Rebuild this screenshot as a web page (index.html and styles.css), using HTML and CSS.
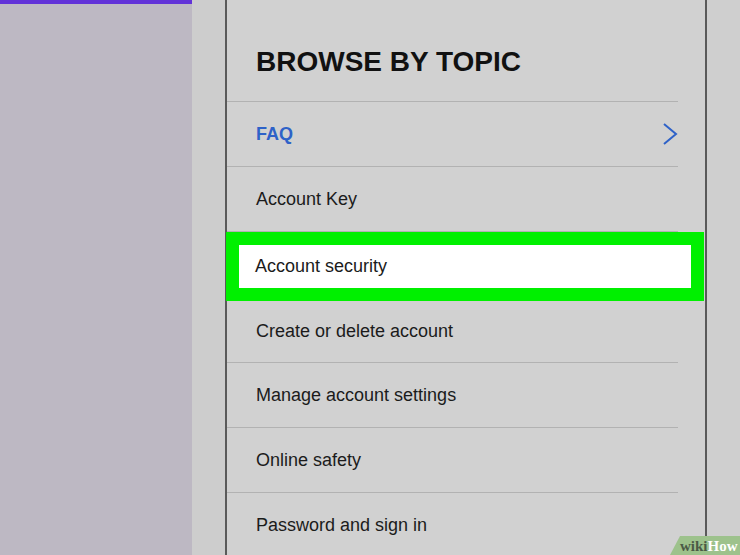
FILE: index.html
```html
<!DOCTYPE html>
<html lang="en">
<head>
    <meta charset="UTF-8">
    <meta name="viewport" content="width=device-width, initial-scale=1.0">
    <title>Browse by topic</title>
    <link rel="stylesheet" href="styles.css">
</head>
<body>
    <div class="page">
        <div class="sidebar"></div>
        <div class="gutter"></div>
        <div class="panel">
            <h1 class="heading">BROWSE BY TOPIC</h1>
            <ul class="topics">
                <li class="topic faq">
                    <span>FAQ</span>
                    <svg class="chevron" width="16" height="24" viewBox="0 0 16 24">
                        <polyline points="2,2 14,12 2,22" fill="none" stroke="#2e62c8" stroke-width="2"/>
                    </svg>
                </li>
                <li class="topic">Account Key</li>
                <li class="topic selected">Account security</li>
                <li class="topic after-selected">Create or delete account</li>
                <li class="topic">Manage account settings</li>
                <li class="topic">Online safety</li>
                <li class="topic">Password and sign in</li>
            </ul>
        </div>
        <div class="rest"></div>
    </div>
    <div class="watermark"><span class="wiki">wiki</span><span class="how">How</span></div>
</body>
</html>
```
FILE: styles.css
```css
html, body {
    margin: 0;
    height: 555px;
    overflow: hidden;
}
body {
    font-family: "Liberation Sans", Arial, sans-serif;
    background-color: #cfcfcf;
    position: relative;
}
.page {
    display: flex;
    height: 555px;
}
.sidebar {
    width: 192px;
    background-color: #bdb8c3;
    border-top: 4px solid #6232d8;
    box-sizing: border-box;
}
.gutter {
    width: 33px;
    background-color: #cdcdcd;
}
.panel {
    width: 478px;
    background-color: #d1d1d1;
    border-left: 2px solid #5a5a5a;
    border-right: 2px solid #5a5a5a;
}
.rest {
    flex: 1;
    background-color: #cfcfcf;
}
.heading {
    margin: 0 27px 0 0;
    padding: 46px 0 0 29px;
    height: 55px;
    font-size: 28px;
    font-weight: bold;
    color: #111;
    border-bottom: 1px solid #b2b2b2;
}
.topics {
    list-style: none;
    margin: 0;
    padding: 0;
}
.topic {
    display: flex;
    align-items: center;
    justify-content: space-between;
    height: 64px;
    margin-right: 27px;
    padding-left: 29px;
    font-size: 18px;
    color: #1b1b1b;
    border-bottom: 1px solid #b2b2b2;
}
.faq {
    color: #2e62c8;
    font-weight: bold;
}
.topic.selected {
    box-sizing: border-box;
    height: 69px;
    margin-right: 1px;
    margin-left: -1px;
    padding-left: 16px;
    background-color: #fff;
    border: 13px solid #00f000;
}
.topic.after-selected {
    height: 61px;
}
.watermark {
    position: absolute;
    right: 0;
    bottom: 0;
    width: 60px;
    height: 19px;
    padding-left: 10px;
    background-color: #9dc28c;
    clip-path: polygon(10px 0, 100% 0, 100% 100%, 0 100%);
    font-family: "Liberation Serif", "Times New Roman", serif;
    font-weight: bold;
    font-size: 15px;
    line-height: 20px;
}
.wiki {
    color: #4b5a46;
}
.how {
    color: #fff;
}
```
